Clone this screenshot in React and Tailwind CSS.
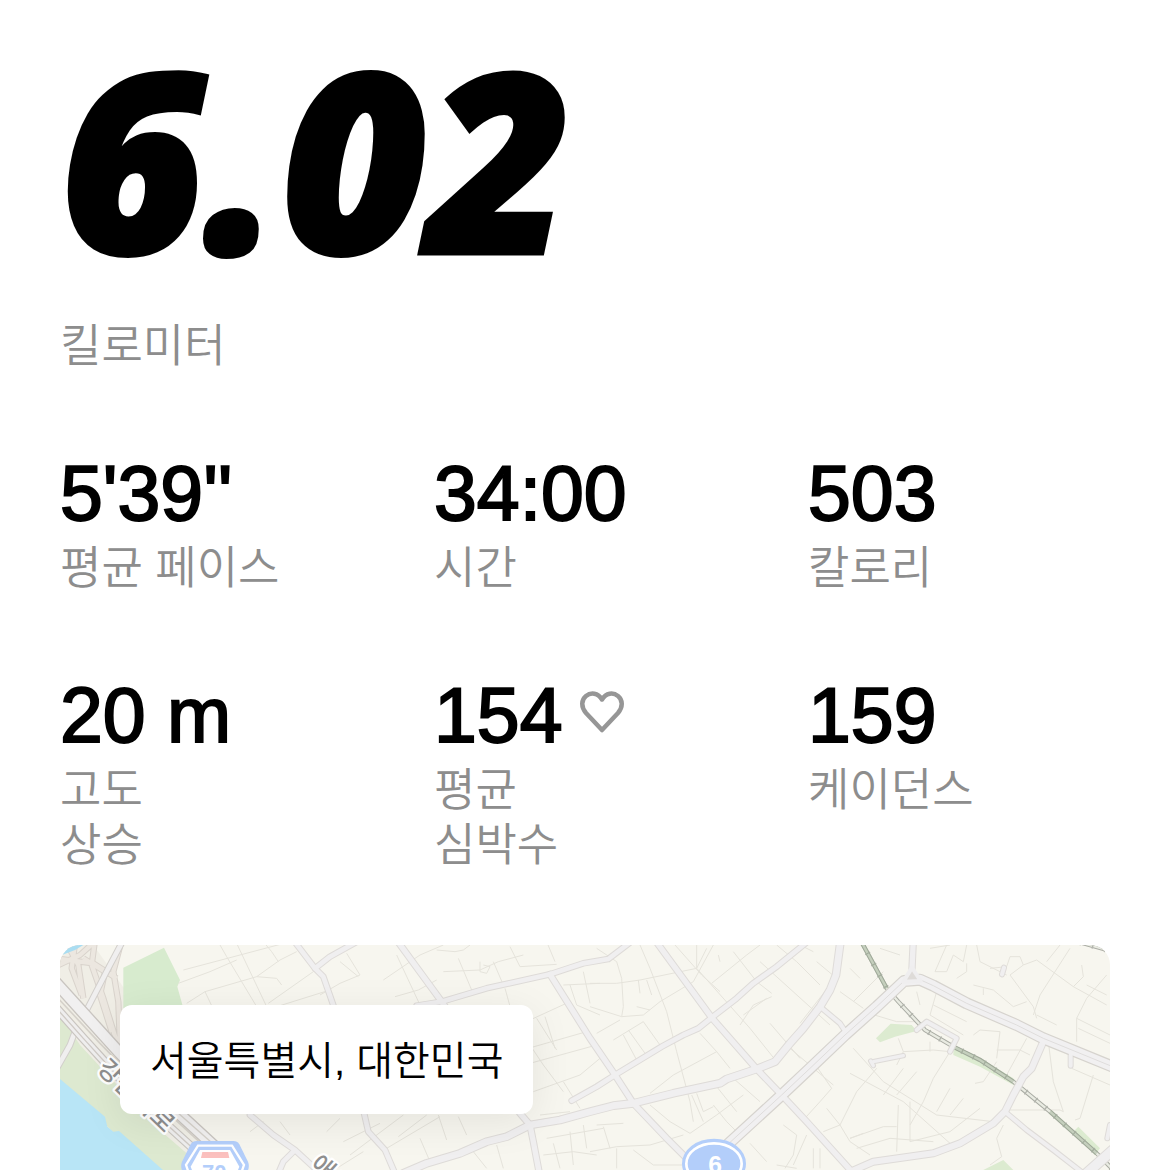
const STATS = [
  { value: "5'39''", label: ["평균 페이스"] },
  { value: "34:00", label: ["시간"] },
  { value: "503", label: ["칼로리"] },
  { value: "20 m", label: ["고도", "상승"] },
  { value: "154", label: ["평균", "심박수"], heart: true },
  { value: "159", label: ["케이던스"] },
];

// width + points of every wider street, drawn as casing and fill
const ROADS = [
  [14, "M730 15 795 100 820 125 855 225"],
  [14, "M795 100 840 65 930 15"],
  [14, "M940 525 955 590 1005 645 1035 715"],
  [16, "M1040 15 1175 200 1410 535 1440 570 1450 620 1468 715"],
  [14, "M1100 212 1175 200 1310 160 1500 118 1600 85 1675 72 1750 15"],
  [16, "M1500 118 1620 310 1695 420 1750 505 1850 610 1940 700"],
  [20, "M1060 715 1130 685 1230 655 1310 620 1370 605 1440 570 1530 555 1620 530 1690 512 1750 505 1870 475 2010 445 2030 432 2120 402 2175 380 2220 325 2260 280 2310 215 2340 165 2358 120 2372 15"],
  [14, "M1565 497 1640 455 1695 420 1835 335 1900 300 1945 280 1985 248 2060 190 2110 145 2180 95 2270 22"],
  [16, "M1815 15 1985 248 2120 402 2195 480 2270 560 2410 715"],
  [12, "M2310 215 2370 265 2390 295"],
  [16, "M2590 15 2586 100"],
  [18, "M2982 315 2945 400 2920 425 2890 480 2865 530 2830 565 2730 625 2650 655 2470 680 2390 715"],
  [12, "M2865 530 2930 585 3010 645 3100 715"],
  [28, "M3110 715 3200 635"],
  [12, "M2600 285 2630 260 2720 310 2700 350"],
  [10, "M2470 380 2560 362 M2462 378 2470 392"],
  [12, "M2862 98 2856 118 M3062 360 3062 392 M3180 570 3172 610"],
  [14, "M600 540 670 600 735 645 800 705 M735 645 700 680 685 715"],
];

const AVENUES = [
  "M1990 668 2195 480 2280 400 2385 300 2480 215 2562 138 2610 134 2650 152 2750 205 2900 270 2980 310 3200 400",
];

const LANES = [
  // north-west blocks
  "M400 105 740 15 M510 30 530 65 575 140 620 215 M560 25 650 215 M640 20 665 50 685 80 M385 145 480 110 560 75 M410 205 465 170 620 125 680 130 695 150 M465 170 485 212 M620 125 690 75 740 50 M655 205 790 110 M690 212 840 165",
  "M870 80 925 125 M890 55 930 120 870 145 810 180 M1000 135 1110 60 1180 30 M1040 60 1110 210 M1035 185 1105 165 1160 135 M1160 45 1215 50 1240 45 1260 30 M1225 70 1265 165 M1180 110 1290 105 1345 80 1420 60 M1290 80 1290 110 1310 115 1320 95 1300 90 M1330 80 1360 150 M1380 35 1410 95 1520 88 M1490 20 1515 80",
  "M1365 160 1390 250 M1440 255 1560 200 M1460 250 1520 345 M1485 245 1515 340 M1400 350 1610 290 M1440 385 1640 330 M1450 470 1590 420 1650 370 M1420 300 1480 390 1540 470 M1540 440 1590 520 M1540 150 1650 145 M1560 150 1580 210 1650 240 M1600 110 1620 205",
  "M830 590 870 550 M880 620 990 565 M900 660 1060 540 M1010 640 1170 545 M1045 605 1130 540 M1110 610 1140 680 M1165 540 1190 615 M1225 545 1250 600 M1270 650 1310 700 M1340 630 1360 700 M860 700 940 650 M600 590 640 560 M690 560 720 600",
  "M1470 540 1560 530 M1490 610 1660 580 M1510 625 1530 700 M1480 660 1570 650 1640 660 M1560 590 1570 690 M1600 570 1610 640",
  // centre blocks
  "M1620 145 1700 145 1770 135 1940 100 1970 40 M1640 40 1700 80 1715 130 1720 215 1715 245 1620 215 M1715 245 1780 240 1830 200 1930 140 1990 30 M1770 30 1800 100 1850 230 1880 350 1920 500 1930 560 M1765 135 1770 175 M1790 135 1805 180 M1760 215 1800 225",
  "M1640 295 1710 255 M1690 315 1780 260 1830 330 M1720 300 1760 375 M1735 285 1785 355 M1800 475 1870 420 2000 350 M1950 295 2000 350 2040 400 M1875 30 1955 120 2010 170 M1940 30 1940 100 2100 280 2180 380 M1985 145 2090 60 2130 30 M2050 50 2120 140 2165 175",
  "M2070 270 2110 210 2165 185 M2080 240 2150 190 M2160 265 2250 370 M2130 80 2340 270 M2180 30 2240 80 2310 150 M2300 80 2360 130 M2250 265 2340 150 M2370 170 2440 220 M2250 30 2290 50 M2005 60 2010 80",
  "M1800 510 1860 560 1920 595 2000 540 2080 480 M1925 480 1960 560 M1940 475 1960 530 1990 515 M1990 510 2030 560 2060 590 M2000 455 2060 530 M2050 430 2130 500 M1640 570 1720 565 M1660 575 1680 640 M1620 650 1700 635 1800 630 1900 600 M1750 645 1810 690 1900 690 M1700 640 1700 700",
  "M2220 340 2350 450 M2290 380 2345 460 2310 500 2260 555 M2330 520 2370 570 2400 620 2460 660 M2370 570 2420 470 2480 400 M2320 590 2370 570 M2200 570 2240 600 2230 660 2205 700 M2270 600 2230 690 M2100 625 2150 680 M2180 690 2240 700 M2290 640 2290 700 M2310 640 2310 700 M2400 610 2440 595",
  // east blocks
  "M2400 100 2430 130 M2410 200 2500 110 M2440 230 2540 260 2600 260 M2490 40 2550 60 M2640 40 2700 30 M2690 30 2655 110 2690 110 2710 60 2740 80 2750 30 M2780 30 2790 80 2870 120 M2750 85 2750 110 2720 130 M2820 100 2870 95 2880 65 2910 65 2920 90 2880 120 2950 215 2960 250 M2920 90 2960 75 3070 155 3170 210",
  "M3060 40 2970 180 2950 240 M3030 30 2990 80 M3070 155 3100 125 3095 90 M3170 120 3110 190 3080 250 3080 320 M3170 180 3110 150 M2770 150 2830 165 2890 215 2930 200 M2800 160 2800 180 M2660 170 2640 240 2740 300 M2650 210 2750 260 M2770 300 2790 285 2850 290 2840 370 M2840 345 2910 345 2940 360",
  "M2930 310 2870 420 M2995 320 3010 440 3040 530 3030 525 M2870 525 3030 525 M3065 400 3180 450 M3130 420 3090 550 3075 555 M2960 240 3020 270 M3080 250 3180 300 M3085 280 3180 325 M2840 380 2800 440 2775 445 M2545 310 2560 350 2540 390",
  "M2410 340 2500 440 2660 540 2830 560 M2560 350 2650 345 2700 350 M2640 320 2640 350 M2700 350 2650 430 2620 500 2580 570 M2600 410 2540 480 M2560 400 2500 480 M2400 415 2560 500 2700 625 M2700 460 2660 530 M2740 490 2700 540 M2545 510 2540 650 M2580 500 2580 620 2700 590 2790 520 M2400 610 2500 575 2540 575 M2420 640 2520 610 2650 620 M2860 570 2840 610 2855 665 2820 690 M2600 170 2610 210",
];

const RAIL =
  "M2434 20 2510 160 2545 200 2625 285 2710 335 2790 375 2890 440 3000 530 3140 655 3195 710M3090 22 3190 50";

const RAMPS =
  "M15 95 90 60 140 15M50 25 85 90 100 190M75 25 65 100 95 180M135 15 125 90 160 190 200 320M100 70 165 110 150 180 185 290M215 15 190 110 205 200 210 330M15 70 130 85 200 130";

function HeartIcon() {
  return (
    <svg
      viewBox="0 0 46 44"
      className="mb-1.5 h-11 w-12 shrink-0"
      fill="none"
      stroke="#969696"
      strokeWidth="4.500"
      strokeLinejoin="round"
      aria-hidden="true"
    >
      <path d="M23 40 7 23C2 17 2 10 7 6 12 2 19 3 23 9.500 27 3 34 2 39 6 44 10 44 17 39 23Z" />
    </svg>
  );
}

function Stat({ value, label, heart }) {
  return (
    <div>
      <div className="flex items-center gap-4 text-[77px] leading-[88px] text-black [-webkit-text-stroke:2px_#000]">
        {value}
        {heart && <HeartIcon />}
      </div>
      <div className="mt-1 text-[45px] leading-[55px] font-[350] text-[#8d8d8d]">
        {label.map((line) => (
          <div key={line}>{line}</div>
        ))}
      </div>
    </div>
  );
}

function RouteMap() {
  return (
    <svg viewBox="30 30 3150 675" className="block w-full" aria-hidden="true">
      <rect x="30" y="30" width="3150" height="675" fill="#f7f6ef" />

      {/* river and parks */}
      <path d="M30 400V30H130L230 170 210 330 480 640 560 715H330L30 430Z" fill="#f0eee6" />
      <path d="M30 240 90 330 210 460 300 560 480 715H320L30 440Z" fill="#dde9d0" />
      <path d="M30 432 165 545 172 575 190 590 207 588 350 715H30Z" fill="#b8e5f6" />
      <path d="M220 98 342 38 390 135 382 155 400 220H220Z" fill="#d7ebce" />
      <path d="M2478 310 2522 266 2585 270 2600 288 2535 305 2490 322Z" fill="#dcebd0" />
      <path d="M2710 335 2790 370 2890 430 2900 455 2790 395 2710 360Z" fill="#dcebd0" />
      <path d="M3070 590 3085 575 3150 640 3135 660Z" fill="#dcebd0" />
      <path d="M2800 705 2860 675 2890 705Z" fill="#dcebd0" />

      <g fill="none" stroke="#e5e3db" strokeWidth="3" strokeLinejoin="round">
        {LANES.map((d) => (
          <path key={d} d={d} />
        ))}
      </g>

      <path d={RAIL} fill="none" stroke="#a9aba3" strokeWidth="13" />
      <path d={RAIL} fill="none" stroke="#e9ebe2" strokeWidth="7" />
      <path d={RAIL} fill="none" stroke="#b2b4ac" strokeWidth="17" strokeDasharray="4 34" />
      <path
        d="M2434 20 2510 160M2715 338 2790 375 2890 440M3000 530 3140 655"
        fill="none"
        stroke="#8fa486"
        strokeOpacity=".4"
        strokeWidth="13"
      />

      <g fill="none" strokeLinejoin="round" strokeLinecap="round">
        {ROADS.map(([w, d]) => (
          <path key={d} d={d} stroke="#dedbd8" strokeWidth={w + 6} />
        ))}
        {AVENUES.map((d) => (
          <path key={d} d={d} stroke="#d6d3ce" strokeWidth="36" />
        ))}
        {ROADS.map(([w, d]) => (
          <path key={d} d={d} stroke="#f0eff0" strokeWidth={w} />
        ))}
        {AVENUES.map((d) => (
          <g key={d}>
            <path d={d} stroke="#f1f0f1" strokeWidth="29" />
            <path d={d} stroke="#dfdddc" strokeWidth="3" />
          </g>
        ))}
        <path d="M2586 98 2560 140 2612 138Z" fill="#dedbd8" stroke="#efeeef" strokeWidth="12" />
      </g>

      {/* interchange and riverside expressway */}
      <g fill="none" strokeLinejoin="round">
        <path d={RAMPS} stroke="#d9d3cc" strokeWidth="19" />
        <path d={RAMPS} stroke="#ece7e0" strokeWidth="13" />
        <path d="M220 15 180 90 110 225M75 290 60 330 15 410" stroke="#d2cfcb" strokeWidth="20" />
        <path d="M220 15 180 90 110 225M75 290 60 330 15 410" stroke="#f0efef" strokeWidth="14" />
        <path d="M15 140 210 355 370 520 500 640" stroke="#c9c5c0" strokeWidth="38" />
        <path d="M15 140 210 355 370 520 500 640" stroke="#f1f0f0" strokeWidth="30" />
        <path d="M15 215 100 310 200 420 330 550 440 650" stroke="#c9c5c0" strokeWidth="28" />
        <path d="M15 215 100 310 200 420 330 550 440 650" stroke="#efeeee" strokeWidth="21" />
        <path d="M15 180 150 325 350 530 480 650" stroke="#d5d1ca" strokeWidth="5" />
        <path d="M15 215 100 310 200 420 330 550 440 650" stroke="#cfcac5" strokeWidth="4" />
        <path d="M380 530 510 645" stroke="#d5d1ca" strokeWidth="4" />
      </g>
      <path d="M30 30H100L75 45 30 62Z" fill="#a9ddf2" />

      <g
        className="[font-family:'Noto_Sans_CJK_KR',sans-serif]"
        fill="#8f8f8f"
        stroke="#fff"
        strokeWidth="14"
        strokeLinejoin="round"
        paintOrder="stroke"
        fontSize="74"
        fontWeight="500"
      >
        <text transform="translate(138 404) rotate(44)">강변</text>
        <text transform="translate(246 502) rotate(44)">북로</text>
        <text transform="translate(776 694) rotate(42)">애오개로</text>
      </g>

      {/* route shields */}
      <g className="[font-family:'Liberation_Sans',sans-serif]" fontWeight="700" textAnchor="middle">
        <path
          d="M440 618H550Q562 618 568 628L594 680Q600 695 592 710H398Q390 695 396 680L422 628Q428 618 440 618Z"
          fill="#b3cefa"
        />
        <path d="M444 632H546L582 690 575 710H415L408 690Z" fill="#b3cefa" stroke="#fff" strokeWidth="7" />
        <path d="M450 645H540L568 695 562 710H428L422 695Z" fill="#fff" />
        <path d="M457 651H534L538 669H453Z" fill="#fbc0be" />
        <text x="493" y="734" fontSize="66" fill="#b3cefa">
          70
        </text>
        <ellipse cx="1992" cy="686" rx="96" ry="75" fill="#b3cefa" />
        <ellipse cx="1992" cy="686" rx="83" ry="61" fill="none" stroke="#fff" strokeWidth="8" />
        <text x="1995" y="713" fontSize="74" fill="#fff">
          6
        </text>
      </g>
    </svg>
  );
}

export default function App() {
  return (
    <main className="min-h-screen bg-white px-[60px] pt-6 [font-family:'Liberation_Sans','Noto_Sans_CJK_KR',sans-serif]">
      <section>
        <h1 className="mb-6 text-[250px] leading-[267px] font-extrabold text-black italic [font-family:'Open_Sans',sans-serif] [-webkit-text-stroke:4px_#000]">
          6.02
        </h1>
        <p className="text-[45px] leading-[64px] font-[350] text-[#8d8d8d]">킬로미터</p>
      </section>

      <section className="mt-[70px] grid grid-cols-[374fr_374fr_302fr] gap-y-[75px]">
        {STATS.map((stat) => (
          <Stat key={stat.value} {...stat} />
        ))}
      </section>

      <section className="relative mt-[72px] overflow-hidden rounded-t-[20px]">
        <RouteMap />
        <div className="absolute top-[60px] left-[60px] rounded-xl bg-white px-[30px] pt-[26px] pb-[22px] text-[40px] leading-[61px] font-[350] text-black shadow-[0_8px_40px_rgba(0,0,0,0.08)]">
          서울특별시, 대한민국
        </div>
      </section>
    </main>
  );
}
